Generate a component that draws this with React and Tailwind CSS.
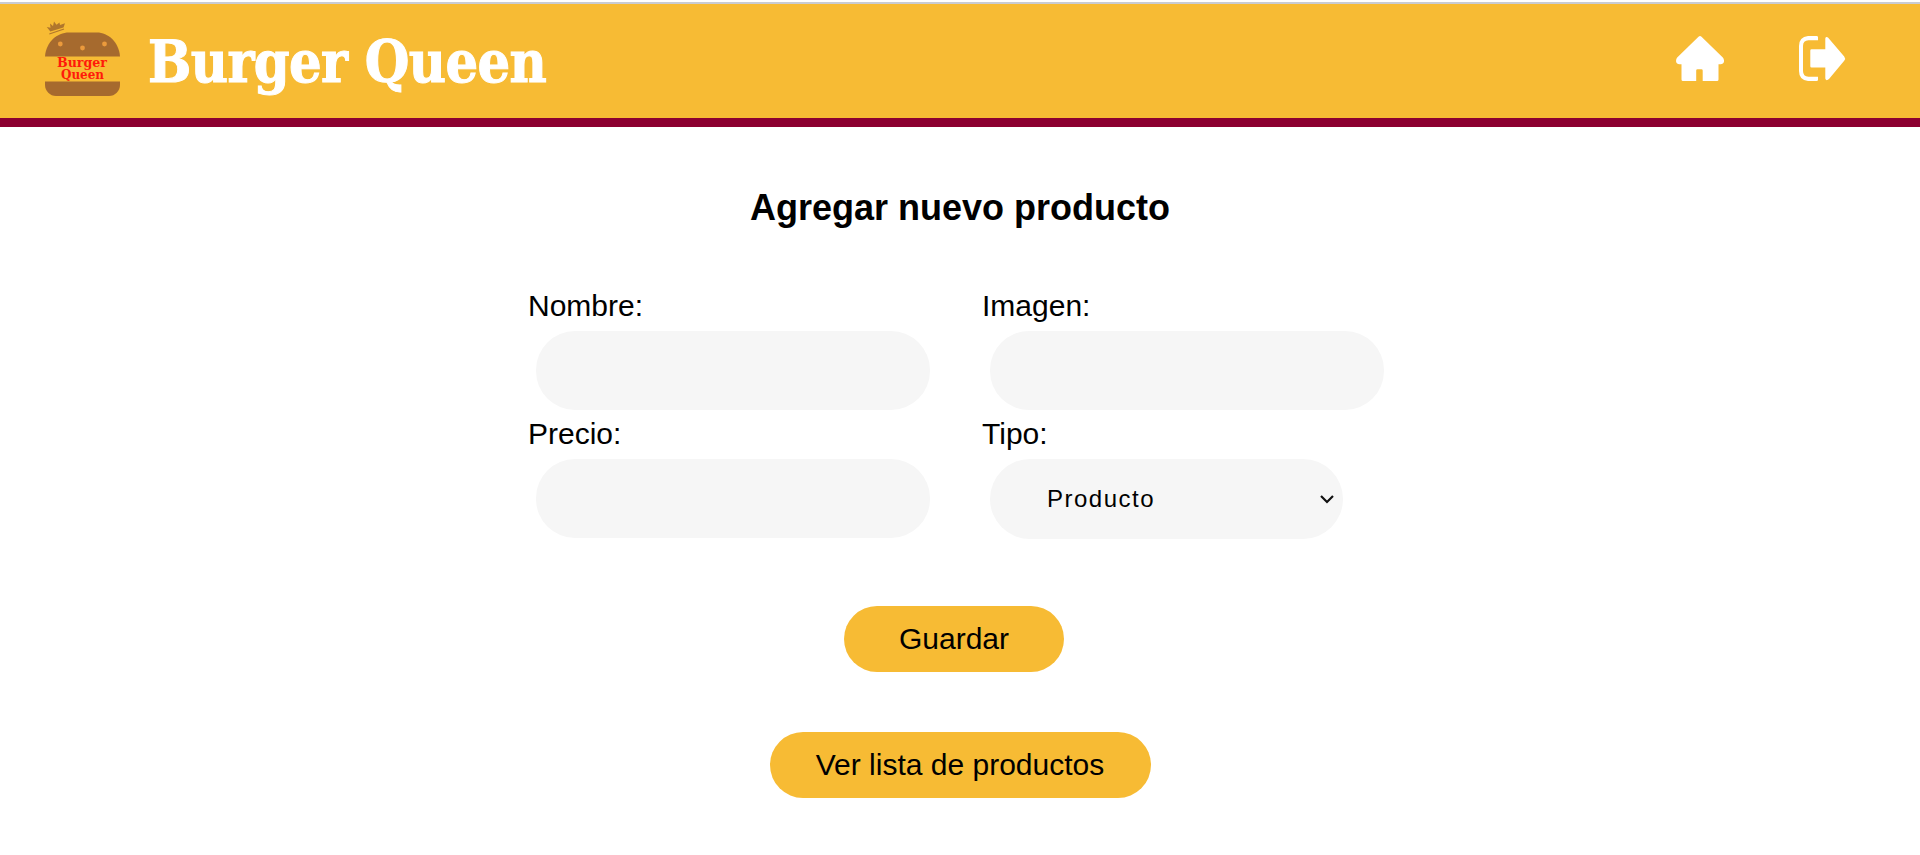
function BurgerLogo() {
  return (
    <svg viewBox="0 0 80 80" className="h-20 w-20 shrink-0" aria-hidden="true">
      <path d="M5.300 13.500 L1.800 9 L5.500 9.800 L5 5.500 L8 8 L9 3.500 L11.500 6.800 L14.500 4.500 L15 7 L20 5.300 L18.500 9.500 Z" fill="#b0762c" />
      <path d="M4.300 16 L19 11" stroke="#b0762c" strokeWidth="1.200" fill="none" />
      <path d="M0 38.500 C1 24 12 14.500 24 14.500 H52 C63 14.500 74 24 75 38.500 Z" fill="#a66a2e" />
      <path d="M0 63.500 H75 V67 C75 73 70 78 64 78 H11 C5 78 0 73 0 67 Z" fill="#a66a2e" />
      <g fill="#eb9a3c">
        <circle cx="15.300" cy="26" r="2.400" />
        <circle cx="37.500" cy="30" r="2.400" />
        <circle cx="59.500" cy="26" r="2.400" />
      </g>
      <g fill="#ff1a0a" fontFamily="'DejaVu Serif', serif" fontSize="12.500" fontWeight="700">
        <text x="12" y="49" textLength="50" lengthAdjust="spacingAndGlyphs">Burger</text>
        <text x="16" y="61" textLength="43" lengthAdjust="spacingAndGlyphs">Queen</text>
      </g>
    </svg>
  );
}

function HomeIcon() {
  return (
    <svg viewBox="0 0 48 46" className="h-[46px] w-12" fill="#fff" aria-hidden="true">
      <path d="M22.5 .7 Q24 -.6 25.500 .7 L46.800 21.500 Q48.200 23.200 48 25.500 Q47.500 28.300 44.500 28.300 H42.500 V43.500 Q42.500 45 41 45 H26.700 V34.500 Q26.700 33.200 25.400 33.200 H21.500 Q20.200 33.200 20.200 34.500 V45 H7 Q5.500 45 5.500 43.500 V28.300 H3.500 Q.5 28.300 .1 25.500 Q-.2 23.200 1.200 21.500 Z" />
    </svg>
  );
}

function LogoutIcon() {
  return (
    <svg viewBox="0 0 47 46" className="h-[46px] w-[47px]" fill="#fff" aria-hidden="true">
      <path d="M9 0 H17.500 Q19 0 19 1.300 V4.300 H9.500 Q4 4.500 4 10 V35 Q4 40.500 9.500 40.700 H19 V43.700 Q19 45 17.500 45 H9 Q0 44 0 35 V10 Q0 1 9 0 Z" />
      <path d="M12.500 13.300 H26.300 V2.500 Q26.700 .3 29 1.500 L45.200 20.500 Q47 22.600 45.200 24.700 L30 43 Q27.200 45.500 26.300 42.500 V31.500 H12.500 Q11.300 31.500 11.300 30.200 V14.600 Q11.300 13.300 12.500 13.300 Z" />
    </svg>
  );
}

function Field({ label, children }) {
  return (
    <label className="flex h-32 flex-col items-start">
      <span className="flex h-12 items-center pb-0.5 pl-px text-[30px] leading-none">{label}</span>
      {children}
    </label>
  );
}

const inputClass = "ml-[9px] h-[79px] w-[394px] rounded-[39px] bg-[#f6f6f6] px-14 text-2xl tracking-[1.5px] outline-none";
const buttonClass = "flex h-[66px] items-center justify-center rounded-[33px] bg-[#f7bb34] text-[30px] leading-none";

export default function App() {
  return (
    <div className="flex h-[855px] w-full flex-col overflow-hidden bg-white font-['Liberation_Sans',Arial,sans-serif] text-black">
      <div className="h-0.5 shrink-0 bg-white" />
      <div className="h-0.5 shrink-0 bg-[#c9ccd3]" />
      <header className="flex h-[123px] shrink-0 items-start justify-between border-b-[9px] border-[#8c0030] bg-[#f7bb34] pr-[74px] pl-[45px]">
        <div className="flex items-start gap-[23px] pt-3.5">
          <BurgerLogo />
          <h1 className="flex h-[86px] items-center whitespace-nowrap font-['DejaVu_Serif_Condensed','DejaVu_Serif',serif] text-[57px] leading-none font-bold tracking-[-0.6px] text-white [-webkit-text-stroke:1px_#fff]">
            Burger Queen
          </h1>
        </div>
        <nav className="flex gap-[75px] pt-8">
          <a href="#inicio" aria-label="Inicio"><HomeIcon /></a>
          <a href="#salir" aria-label="Salir"><LogoutIcon /></a>
        </nav>
      </header>
      <main className="flex flex-col items-center">
        <h2 className="mt-[60px] text-[36px] leading-[41px] font-bold">Agregar nuevo producto</h2>
        <form className="mt-[55px] flex flex-col">
          <div className="grid grid-cols-[454px_412px]">
            <Field label="Nombre:"><input className={inputClass} /></Field>
            <Field label="Imagen:"><input className={inputClass} /></Field>
            <Field label="Precio:"><input className={inputClass} /></Field>
            <Field label="Tipo:">
              <span className="ml-[9px] flex h-20 w-[353px] shrink-0 items-center justify-between rounded-[40px] bg-[#f6f6f6] pr-2 pl-[57px]">
                <span className="text-2xl tracking-[1.5px]">Producto</span>
                <svg viewBox="0 0 16 10" className="h-2.5 w-4" fill="none" stroke="#111" strokeWidth="2.200" aria-hidden="true">
                  <path d="M2 2 L8 8 L14 2" />
                </svg>
              </span>
            </Field>
          </div>
        </form>
        <button className={`${buttonClass} mt-[67px] mr-3 w-[220px]`}>Guardar</button>
        <button className={`${buttonClass} mt-[60px] w-[381px]`}>Ver lista de productos</button>
      </main>
    </div>
  );
}
